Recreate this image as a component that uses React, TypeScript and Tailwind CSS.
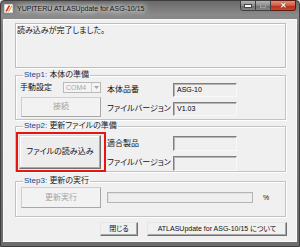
import React from "react";

const font = "font-['Liberation_Sans','Noto_Sans_CJK_JP',sans-serif] [font-feature-settings:'palt']";

function Field({ value, h = "h-[14px]" }: { value?: string; h?: string }) {
  return (
    <div
      className={`${h} w-[64px] border border-t-[#7f7f7f] border-l-[#7f7f7f] border-r-[#f8f8f8] border-b-[#f8f8f8] bg-[#f0f0f0] shadow-[inset_1px_1px_0_#b5b5b5] pl-[3px] text-[7px] leading-[12px] text-black`}
    >
      {value}
    </div>
  );
}

function Group({ step, title, className, children }: { step: string; title: string; className: string; children: React.ReactNode }) {
  return (
    <fieldset className={`ml-[11px] w-[271px] border border-[#c3c3c3] shadow-[1px_1px_0_#fff,inset_1px_1px_0_#fff] px-[4px] ${className}`}>
      <legend className="ml-[3px] px-[1px] text-[8px] leading-[10px] text-[#222]">
        <span className="text-[#1c3f8f]">{step}:</span> {title}
      </legend>
      {children}
    </fieldset>
  );
}

export default function App() {
  return (
    <div className={`w-[300px] h-[247px] overflow-hidden bg-[#f0f0f0] ${font}`}>
      <div className="w-[300px] h-[247px] flex flex-col rounded-t-[4px] border border-[#3d3d3d] bg-[linear-gradient(#6a6a6a,#8a8a8a_14px,#7a7a7a_40px,#6c6c6c)] px-[2px] pb-[4px]">
        {/* title bar */}
        <div className="h-[18px] flex items-start">
          <svg width="9" height="9" viewBox="0 0 9 9" className="mt-[3px] ml-[1px]">
            <rect x="0" y="0" width="9" height="9" fill="#fff" stroke="#9a9a9a" strokeWidth="0.8" />
            <path d="M2 7.5 L5.5 1.5" stroke="#e0301e" strokeWidth="1.6" />
            <path d="M4.5 7.5 L7.8 2" stroke="#f09a20" strokeWidth="1.3" />
          </svg>
          <div className="mt-[2px] ml-[4px] text-[7px] leading-[11px] text-[#111] [text-shadow:0_0_4px_#fff,0_0_6px_#fff,0_0_8px_#fff]">
            YUPITERU ATLASUpdate for ASG-10/15
          </div>
          <div className="ml-auto mr-[1px] -mt-[1px] flex">
            <div className="w-[16px] h-[11px] flex items-end justify-center pb-[3px] rounded-bl-[3px] border border-[#3f3f3f] bg-[linear-gradient(#b4b4b4,#8c8c8c_50%,#6e6e6e_55%,#858585)]">
              <div className="w-[6px] h-[2px] bg-white border border-[#444] box-content -mb-[1px]" />
            </div>
            <div className="w-[15px] h-[11px] flex items-center justify-center border border-l-0 border-[#3f3f3f] bg-[linear-gradient(#b4b4b4,#8c8c8c_50%,#6e6e6e_55%,#858585)]">
              <div className="w-[6px] h-[5px] border border-[#9d9d9d]" />
            </div>
            <div className="w-[25px] h-[11px] flex items-center justify-center rounded-br-[3px] border border-l-0 border-[#5b1b12] bg-[linear-gradient(#e0907c,#cf5a43_50%,#b92d17_55%,#c8472d)] text-white text-[8px] leading-none font-bold [text-shadow:0_0_1px_#000]">
              ✕
            </div>
          </div>
        </div>

        {/* client */}
        <div className="w-[294px] h-[223px] border border-[#fafafa] bg-[#f0f0f0] flex flex-col">
          <div className="mt-[3px] ml-[11px] w-[271px] h-[45px] border border-[#bdbdbd] shadow-[1px_1px_0_#fff,inset_1px_1px_0_#fff] pl-[1px] pt-[2px] text-[8px] leading-[10px] text-[#111]">
            読み込みが完了しました。
          </div>

          <Group step="Step1" title="本体の準備" className="mt-[2px] h-[50px]">
            <div className="flex">
              <div className="w-[81px] flex flex-col">
                <div className="mt-[2px] h-[11px] flex items-center">
                  <span className="text-[8px] leading-[10px] text-[#111]">手動設定</span>
                  <div className="ml-auto w-[38px] h-[11px] flex border border-[#b9b9b9] bg-[#f4f4f4]">
                    <span className="flex-1 pl-[2px] text-[7px] leading-[9px] text-[#a6a6a6]">COM4</span>
                    <div className="w-[9px] h-[9px] border-l border-[#d0d0d0] flex items-center justify-center">
                      <svg width="5" height="3" viewBox="0 0 5 3">
                        <path d="M0 0 H5 L2.5 3 Z" fill="#a6a6a6" />
                      </svg>
                    </div>
                  </div>
                </div>
                <button className="mt-[4px] ml-[1px] w-[80px] h-[20px] border border-[#cfcfcf] border-r-[#a7a7a7] border-b-[#a7a7a7] bg-[#f2f2f2] text-[8px] leading-[10px] text-[#a4a4a4]">
                  接続
                </button>
              </div>
              <div className="ml-[6px] mt-[2px] grid grid-cols-[66px_64px] gap-y-[2px] items-center text-[8px] leading-[10px] text-[#111]">
                <span>本体品番</span>
                <Field value="ASG-10" />
                <span>ファイルバージョン</span>
                <Field value="V1.03" />
              </div>
            </div>
          </Group>

          <Group step="Step2" title="更新ファイルの準備" className="mt-[1px] h-[51px]">
            <div className="flex">
              <div className="-ml-[4px] mt-[1px] border-2 border-[#e8140f] pl-[1px] pr-[3px] py-[1px]">
                <button className="w-[82px] h-[34px] border border-[#d8d8d8] border-r-[#6f6f6f] border-b-[#6f6f6f] shadow-[inset_-1px_-1px_0_#a8a8a8,inset_1px_1px_0_#fff] bg-[#ededed] text-[8px] leading-[10px] text-[#111]">
                  ファイルの読み込み
                </button>
              </div>
              <div className="ml-[1px] mt-[4px] grid grid-cols-[66px_64px] gap-y-[2px] items-center text-[8px] leading-[10px] text-[#111]">
                <span>適合製品</span>
                <Field h="h-[15px]" />
                <span>ファイルバージョン</span>
                <Field h="h-[15px]" />
              </div>
            </div>
          </Group>

          <Group step="Step3" title="更新の実行" className="mt-[4px] h-[41px]">
            <div className="mt-[1px] flex items-center">
              <button className="ml-[1px] w-[80px] h-[21px] border border-[#cfcfcf] border-r-[#a7a7a7] border-b-[#a7a7a7] bg-[#f2f2f2] text-[8px] leading-[10px] text-[#a4a4a4]">
                更新実行
              </button>
              <div className="ml-[6px] w-[146px] h-[11px] border border-[#b4b4b4] shadow-[inset_1px_1px_0_#e2e2e2] bg-[#efefef]" />
              <span className="ml-[10px] text-[7px] leading-[10px] text-[#111]">%</span>
            </div>
          </Group>

          <div className="mt-[5px] mr-[9px] flex justify-end gap-[9px]">
            <button className="w-[38px] h-[14px] border border-[#e6e6e6] border-r-[#6f6f6f] border-b-[#6f6f6f] shadow-[inset_-1px_-1px_0_#a8a8a8] bg-[#f0f0f0] text-[7px] leading-[10px] text-[#111]">
              閉じる
            </button>
            <button className="w-[140px] h-[14px] border border-[#e6e6e6] border-r-[#6f6f6f] border-b-[#6f6f6f] shadow-[inset_-1px_-1px_0_#a8a8a8] bg-[#f0f0f0] text-[7px] leading-[10px] text-[#111]">
              ATLASUpdate for ASG-10/15 について
            </button>
          </div>
        </div>
      </div>
    </div>
  );
}
